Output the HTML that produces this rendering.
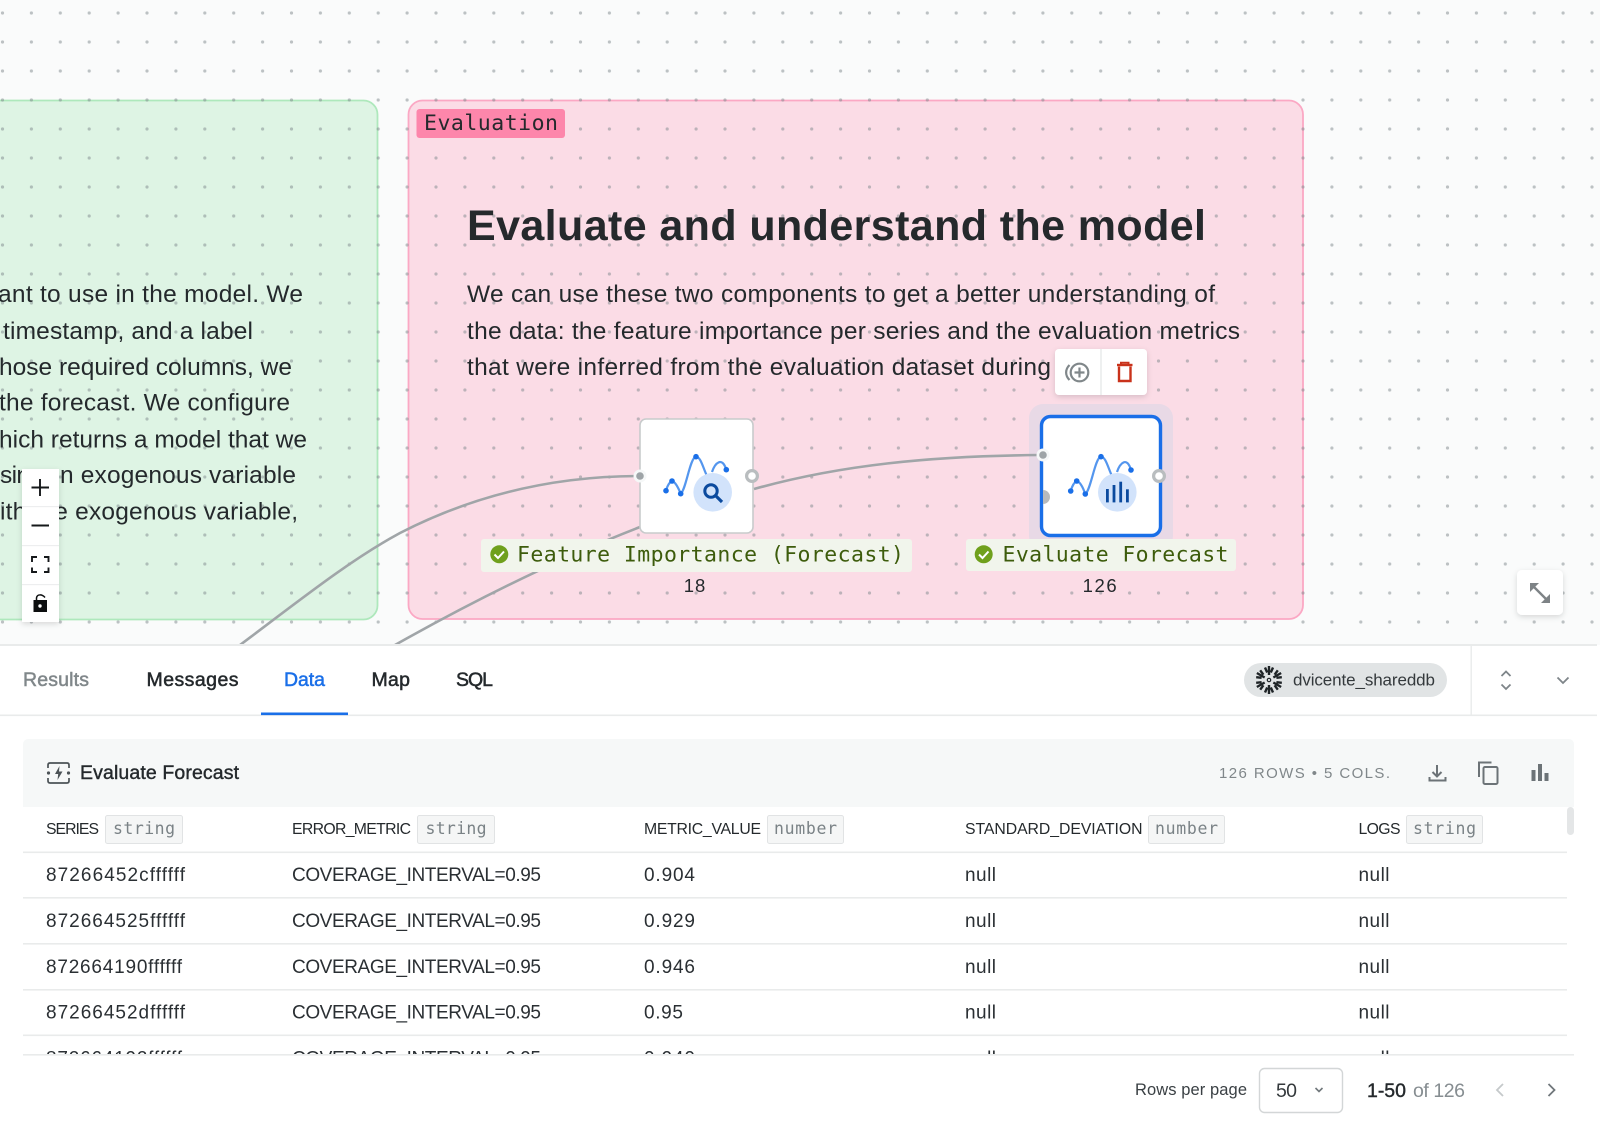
<!DOCTYPE html>
<html lang="en">
<head>
<meta charset="utf-8">
<title>Evaluate Forecast</title>
<style>
html,body{margin:0;padding:0;background:#fff;width:1600px;height:1147px;overflow:hidden}
svg{display:block;filter:blur(.38px)}
text{font-family:"Liberation Sans",sans-serif;fill:#24292c;white-space:pre}
.m{font-family:"DejaVu Sans Mono","Liberation Mono",monospace}
.p{font-size:24.5px;fill:#24292c}
.lb{font-size:21.5px;fill:#3d5c0c}
.tab{font-size:19.5px;stroke-width:.5;stroke:#24292c}
.h{font-size:15.8px;fill:#24292c}
.t{font-size:16.5px;fill:#7a8286}
.c{font-size:19px;fill:#2a2f33}
</style>
</head>
<body>
<svg xmlns="http://www.w3.org/2000/svg" width="1600" height="1147" viewBox="0 0 1600 1147">
<defs>
<pattern id="dots" x="2.5" y="13" width="28.9" height="29" patternUnits="userSpaceOnUse">
<circle cx="0" cy="0" r="1.6" fill="#7d878c" fill-opacity=".5"/>
<circle cx="28.9" cy="0" r="1.6" fill="#7d878c" fill-opacity=".5"/>
<circle cx="0" cy="29" r="1.6" fill="#7d878c" fill-opacity=".5"/>
<circle cx="28.9" cy="29" r="1.6" fill="#7d878c" fill-opacity=".5"/>
</pattern>
<filter id="sh" x="-30%" y="-30%" width="160%" height="170%"><feDropShadow dx="0" dy="2" stdDeviation="3" flood-color="#000" flood-opacity=".14"/></filter>
<clipPath id="tbl"><rect x="23" y="853" width="1544" height="202"/></clipPath>
<clipPath id="canvas"><rect x="0" y="0" width="1600" height="645"/></clipPath>
</defs>

<!-- canvas -->
<rect width="1600" height="645" fill="#fafbfb"/>
<rect x="-20" y="100.5" width="397.500" height="519" rx="14" fill="#def4e4" stroke="#aee8bc" stroke-width="1.8"/>
<rect x="408.5" y="100.5" width="894.500" height="518.500" rx="14" fill="#fbdce6" stroke="#fba8c4" stroke-width="1.8"/>
<rect width="1600" height="645" fill="url(#dots)"/>

<!-- green text -->
<g class="green">
<text class="p" x="-2" y="302" textLength="305" lengthAdjust="spacing">ant to use in the model. We</text>
<text class="p" x="3" y="339" textLength="250" lengthAdjust="spacing">timestamp, and a label</text>
<text class="p" x="-1" y="375" textLength="293" lengthAdjust="spacing">hose required columns, we</text>
<text class="p" x="-1" y="410.500" textLength="291" lengthAdjust="spacing">the forecast. We configure</text>
<text class="p" x="-1" y="447.500" textLength="308" lengthAdjust="spacing">hich returns a model that we</text>
<text class="p" x="0" y="483" textLength="30" lengthAdjust="spacing">sin</text>
<text class="p" x="60" y="483" textLength="236" lengthAdjust="spacing">n exogenous variable</text>
<text class="p" x="0" y="519.500" textLength="298" lengthAdjust="spacing">ith the exogenous variable,</text>
</g>

<!-- evaluation group -->
<rect x="416.500" y="109" width="148.500" height="29" rx="3" fill="#fd86ab"/>
<text class="m" x="424" y="130" font-size="21.500" textLength="134" lengthAdjust="spacing">Evaluation</text>
<text x="467" y="240" font-size="43" font-weight="700" textLength="739" lengthAdjust="spacing" style="fill:#25292c">Evaluate and understand the model</text>
<text class="p" x="467" y="302" textLength="748" lengthAdjust="spacing">We can use these two components to get a better understanding of</text>
<text class="p" x="467" y="339" textLength="773" lengthAdjust="spacing">the data: the feature importance per series and the evaluation metrics</text>
<text class="p" x="467" y="375" textLength="584" lengthAdjust="spacing">that were inferred from the evaluation dataset during</text>

<!-- edges below node 2 halo -->
<g clip-path="url(#canvas)" fill="none" stroke="#a0a5a8" stroke-width="2.6">
<path d="M240 645C300 600 350 560 400 533C470 497 550 476 640 476"/>
<path d="M395 645C475 600 560 558 640 527"/>
</g>

<!-- node 1 -->
<rect x="640" y="419" width="113" height="114" rx="6" fill="#fff" stroke="#c8cbcc" stroke-width="1.6"/>
<circle cx="640" cy="476" r="6.5" fill="#f6f8f8"/><circle cx="640" cy="476" r="3.8" fill="#9ea4a7"/>
<circle cx="752" cy="476" r="5.4" fill="#fff" stroke="#b9bdbf" stroke-width="3.2"/>
<g>
<path d="M666 490.7Q668 483 672 481Q676 482 680.7 493.7C686 490 690 457 696 456.7C701 457 703 468 707 476M712 472C715 463 722 456 726.3 469.7" fill="none" stroke="#5496ee" stroke-width="2.2"/>
<g fill="#1a6fe8"><circle cx="666" cy="490.7" r="2.8"/><circle cx="672" cy="481" r="2.8"/><circle cx="680.7" cy="493.7" r="2.8"/><circle cx="696" cy="456.7" r="2.8"/><circle cx="726.3" cy="469.7" r="2.8"/></g>
<circle cx="712.7" cy="492.3" r="19.3" fill="#d2e3fb"/>
<circle cx="711" cy="491" r="6.2" fill="none" stroke="#0b4a9e" stroke-width="3"/>
<path d="M715.5 495.5L722 502" stroke="#0b4a9e" stroke-width="3.2"/>
</g>

<!-- label 1 -->
<rect x="481" y="539" width="431" height="33" rx="3" fill="#f1f5ec"/>
<circle cx="499.3" cy="554.3" r="9" fill="#6fa01c"/>
<path d="M494.5 554.5L498 558L504 551.5" fill="none" stroke="#fff" stroke-width="2"/>
<text class="m lb" x="517" y="561.500" textLength="387" lengthAdjust="spacing">Feature Importance (Forecast)</text>
<text x="695" y="592" font-size="18.5" text-anchor="middle" letter-spacing="1">18</text>

<!-- node 2 -->
<rect x="1029" y="404" width="144" height="146" rx="14" fill="#e8d9e6"/>
<path d="M754 489C840 465 930 456 1040 455" fill="none" stroke="#a0a5a8" stroke-width="2.6"/>
<rect x="1041.5" y="416.5" width="119" height="119" rx="9" fill="#fff" stroke="#1a6fe8" stroke-width="3.4"/>
<path d="M1043 490A7 7 0 0 1 1043 504Z" fill="#b7babc"/>
<circle cx="1043" cy="455" r="6.5" fill="#f6f8f8"/><circle cx="1043" cy="455" r="3.8" fill="#9ea4a7"/>
<circle cx="1159" cy="476" r="5.4" fill="#fff" stroke="#b9bdbf" stroke-width="3.2"/>
<g>
<path d="M1070.7 491Q1073 483 1076.7 481Q1081 482 1085.3 494C1091 490 1095 457 1101 456.7C1106 457 1108 468 1112 476M1117 472C1120 463 1127 456 1131 470" fill="none" stroke="#5496ee" stroke-width="2.2"/>
<g fill="#1a6fe8"><circle cx="1070.7" cy="491" r="2.8"/><circle cx="1076.7" cy="481" r="2.8"/><circle cx="1085.3" cy="494" r="2.8"/><circle cx="1101" cy="456.7" r="2.8"/><circle cx="1131" cy="470" r="2.8"/></g>
<circle cx="1117.3" cy="492.3" r="19.3" fill="#d2e3fb"/>
<g fill="#0b4a9e"><rect x="1106" y="489" width="2.8" height="13.4"/><rect x="1112.6" y="485" width="2.8" height="17.4"/><rect x="1119.3" y="481.7" width="2.8" height="20.7"/><rect x="1126" y="489.3" width="2.8" height="13.1"/></g>
</g>

<!-- label 2 -->
<rect x="966" y="539" width="270" height="32" rx="3" fill="#f1f5ec"/>
<circle cx="983.7" cy="554.3" r="9" fill="#6fa01c"/>
<path d="M979 554.5L982.5 558L988.5 551.5" fill="none" stroke="#fff" stroke-width="2"/>
<text class="m lb" x="1002.500" y="561.500" textLength="226" lengthAdjust="spacing">Evaluate Forecast</text>
<text x="1100.500" y="592" font-size="18.5" text-anchor="middle" letter-spacing="1.6">126</text>

<!-- node toolbar -->
<g filter="url(#sh)"><rect x="1055" y="349" width="92" height="46" rx="4" fill="#fff"/></g>
<rect x="1100.4" y="349" width="1.2" height="46" fill="#e3e5e6"/>
<g fill="none" stroke="#80878a" stroke-width="2.200" transform="translate(-1 .5)">
<circle cx="1080.5" cy="372" r="8.8"/>
<path d="M1080.5 367V377M1075.5 372H1085.5"/>
<path d="M1070.5 364.5C1066 369 1066 375 1070.5 379.5"/>
</g>
<g fill="none" stroke="#c9321b" stroke-width="2.4" transform="translate(0 .5)">
<path d="M1117 364.5H1132.5"/>
<path d="M1121 363.5V362.2H1128.5V363.5" stroke-width="2"/>
<path d="M1119 366V380.5H1130.5V366"/>
</g>

<!-- zoom controls -->
<g filter="url(#sh)"><rect x="22" y="469" width="37" height="153" fill="#fff"/></g>
<g fill="#edeeef"><rect x="22" y="506" width="37" height="1.2"/><rect x="22" y="545" width="37" height="1.2"/><rect x="22" y="584" width="37" height="1.2"/></g>
<g fill="none" stroke="#15181a" stroke-width="1.9">
<path d="M31.5 487.5H49M40 479V496"/>
<path d="M31.5 525.5H49"/>
<path d="M32 562V557H37M44 557H48.5V562M48.5 567.5V572H44M37 572H32V567.5"/>
</g>
<path d="M33.5 600H47V612H33.5Z" fill="#0c0e0f"/>
<path d="M36.500 600V598C37 594 42 594 45 597.500" fill="none" stroke="#0c0e0f" stroke-width="1.5"/>
<circle cx="40" cy="606" r="1.7" fill="#fff"/>

<!-- expand -->
<g filter="url(#sh)"><rect x="1517" y="570" width="46" height="45" rx="5" fill="#fff"/></g>
<path d="M1534 587L1546 599" stroke="#7e8386" stroke-width="2.4"/>
<path d="M1530 583H1539L1530 592ZM1550 603H1541L1550 594Z" fill="#7e8386"/>

<!-- bottom panel -->
<rect x="0" y="645" width="1600" height="502" fill="#fff"/>
<rect x="0" y="644" width="1597" height="2" fill="#e9ebeb"/>
<rect x="0" y="714.5" width="1597" height="1.6" fill="#e9ebeb"/>
<rect x="1470.5" y="645" width="1.4" height="70" fill="#e9ebeb"/>

<text class="tab" x="23" y="686" textLength="66" lengthAdjust="spacing" style="fill:#80878a;stroke:#80878a">Results</text>
<text class="tab" x="146.500" y="686" textLength="92" lengthAdjust="spacing">Messages</text>
<text class="tab" x="284" y="686" textLength="41" lengthAdjust="spacing" style="fill:#1a6fe8;stroke:#1a6fe8">Data</text>
<text class="tab" x="371.500" y="686" textLength="38.500" lengthAdjust="spacing">Map</text>
<text class="tab" x="456" y="686" textLength="37" lengthAdjust="spacing">SQL</text>
<rect x="261" y="712.5" width="87" height="2.6" fill="#1a6fe8"/>

<!-- chip -->
<rect x="1244" y="663" width="203" height="34" rx="17" fill="#e1e4e5"/>
<g transform="translate(1269 680)" fill="none" stroke="#1f2427" stroke-width="2.4">
<circle r="1.7" stroke-width="1.2"/>
<g><path d="M0 -5V-14M-4 -12.500L-1.800 -7.500M4 -12.500L1.800 -7.500"/></g>
<g transform="rotate(60)"><path d="M0 -5V-14M-4 -12.500L-1.800 -7.500M4 -12.500L1.800 -7.500"/></g>
<g transform="rotate(120)"><path d="M0 -5V-14M-4 -12.500L-1.800 -7.500M4 -12.500L1.800 -7.500"/></g>
<g transform="rotate(180)"><path d="M0 -5V-14M-4 -12.500L-1.800 -7.500M4 -12.500L1.800 -7.500"/></g>
<g transform="rotate(240)"><path d="M0 -5V-14M-4 -12.500L-1.800 -7.500M4 -12.500L1.800 -7.500"/></g>
<g transform="rotate(300)"><path d="M0 -5V-14M-4 -12.500L-1.800 -7.500M4 -12.500L1.800 -7.500"/></g>
</g>
<text x="1293" y="685.5" font-size="17" textLength="142" lengthAdjust="spacing" style="fill:#34393c">dvicente_shareddb</text>
<g fill="none" stroke="#7e8589" stroke-width="1.8">
<path d="M1501.5 676L1506 671.5L1510.5 676"/>
<path d="M1501.5 684.5L1506 689L1510.5 684.5"/>
<path d="M1557.5 677.500L1563 683L1568.5 677.500"/>
</g>

<!-- table header -->
<path d="M23 807V745Q23 739 29 739H1568Q1574 739 1574 745V807Z" fill="#f6f8f8"/>
<g fill="none" stroke="#4c5357" stroke-width="1.7">
<path d="M48 768V765Q48 763 50 763H67Q69 763 69 765V768"/>
<path d="M48 778V781Q48 783 50 783H67Q69 783 69 781V778"/>
</g>
<g fill="#4c5357"><circle cx="48.5" cy="773" r="1.6"/><circle cx="68.5" cy="773" r="1.6"/></g>
<path d="M59.5 766L55 774H58.2L57.5 780L62.5 771.5H59Z" fill="#4c5357"/>
<text x="80" y="779" font-size="19.5" textLength="159" lengthAdjust="spacing" style="stroke:#24292c;stroke-width:.4">Evaluate Forecast</text>
<text x="1219" y="778" font-size="15" textLength="171" lengthAdjust="spacing" style="fill:#80878a">126 ROWS • 5 COLS.</text>
<g fill="none" stroke="#6c7377" stroke-width="2">
<path d="M1437 765V776M1432.5 772L1437 776.5L1441.5 772"/>
<path d="M1429.5 777V780.5H1445.5V777"/>
<path d="M1479 777V762.500H1491.500"/>
<rect x="1483.500" y="767" width="14" height="17" rx="1.4"/>
</g>
<g fill="#6c7377"><rect x="1531.5" y="770" width="4" height="11"/><rect x="1538" y="764" width="4" height="17"/><rect x="1544.5" y="773" width="4" height="8"/></g>

<!-- column headers -->
<text class="h" x="46" y="834" textLength="53" lengthAdjust="spacing">SERIES</text>
<rect x="105.500" y="815.5" width="77" height="28" rx="2" fill="#f5f6f6" stroke="#e1e3e4"/>
<text class="m t" x="113" y="834" textLength="62" lengthAdjust="spacing">string</text>

<text class="h" x="292" y="834" textLength="119" lengthAdjust="spacing">ERROR_METRIC</text>
<rect x="417.5" y="815.5" width="77" height="28" rx="2" fill="#f5f6f6" stroke="#e1e3e4"/>
<text class="m t" x="425.500" y="834" textLength="61" lengthAdjust="spacing">string</text>

<text class="h" x="644" y="834" textLength="117" lengthAdjust="spacing">METRIC_VALUE</text>
<rect x="767.5" y="815.5" width="76" height="28" rx="2" fill="#f5f6f6" stroke="#e1e3e4"/>
<text class="m t" x="774" y="834" textLength="63" lengthAdjust="spacing">number</text>

<text class="h" x="965" y="834" textLength="177.500" lengthAdjust="spacing">STANDARD_DEVIATION</text>
<rect x="1148.5" y="815.5" width="76" height="28" rx="2" fill="#f5f6f6" stroke="#e1e3e4"/>
<text class="m t" x="1155" y="834" textLength="63" lengthAdjust="spacing">number</text>

<text class="h" x="1358.500" y="834" textLength="42" lengthAdjust="spacing">LOGS</text>
<rect x="1406.5" y="815.500" width="76" height="28" rx="2" fill="#f5f6f6" stroke="#e1e3e4"/>
<text class="m t" x="1413" y="834" textLength="63" lengthAdjust="spacing">string</text>

<rect x="1567" y="807" width="7" height="28" rx="3.500" fill="#e4e6e7"/>

<!-- rows -->
<g fill="#e9ebeb">
<rect x="23" y="851.500" width="1544" height="1.6"/>
<rect x="23" y="897" width="1544" height="1.600"/>
<rect x="23" y="943" width="1544" height="1.600"/>
<rect x="23" y="989" width="1544" height="1.600"/>
<rect x="23" y="1034.500" width="1544" height="1.600"/>
</g>
<g clip-path="url(#tbl)">
<text class="c" x="46" y="881" textLength="139" lengthAdjust="spacing">87266452cffffff</text>
<text class="c" x="292" y="881" textLength="249" lengthAdjust="spacing">COVERAGE_INTERVAL=0.95</text>
<text class="c" x="644" y="881" textLength="51" lengthAdjust="spacing">0.904</text>
<text class="c" x="965" y="881" textLength="31" lengthAdjust="spacing">null</text>
<text class="c" x="1358.500" y="881" textLength="31" lengthAdjust="spacing">null</text>

<text class="c" x="46" y="927" textLength="139" lengthAdjust="spacing">872664525ffffff</text>
<text class="c" x="292" y="927" textLength="249" lengthAdjust="spacing">COVERAGE_INTERVAL=0.95</text>
<text class="c" x="644" y="927" textLength="51" lengthAdjust="spacing">0.929</text>
<text class="c" x="965" y="927" textLength="31" lengthAdjust="spacing">null</text>
<text class="c" x="1358.500" y="927" textLength="31" lengthAdjust="spacing">null</text>

<text class="c" x="46" y="973" textLength="136" lengthAdjust="spacing">872664190ffffff</text>
<text class="c" x="292" y="973" textLength="249" lengthAdjust="spacing">COVERAGE_INTERVAL=0.95</text>
<text class="c" x="644" y="973" textLength="51" lengthAdjust="spacing">0.946</text>
<text class="c" x="965" y="973" textLength="31" lengthAdjust="spacing">null</text>
<text class="c" x="1358.500" y="973" textLength="31" lengthAdjust="spacing">null</text>

<text class="c" x="46" y="1018.500" textLength="139" lengthAdjust="spacing">87266452dffffff</text>
<text class="c" x="292" y="1018.500" textLength="249" lengthAdjust="spacing">COVERAGE_INTERVAL=0.95</text>
<text class="c" x="644" y="1018.500" textLength="39" lengthAdjust="spacing">0.95</text>
<text class="c" x="965" y="1018.500" textLength="31" lengthAdjust="spacing">null</text>
<text class="c" x="1358.500" y="1018.500" textLength="31" lengthAdjust="spacing">null</text>

<text class="c" x="46" y="1064.500" textLength="136" lengthAdjust="spacing">872664192ffffff</text>
<text class="c" x="292" y="1064.500" textLength="249" lengthAdjust="spacing">COVERAGE_INTERVAL=0.95</text>
<text class="c" x="644" y="1064.500" textLength="51" lengthAdjust="spacing">0.940</text>
<text class="c" x="965" y="1064.500" textLength="31" lengthAdjust="spacing">null</text>
<text class="c" x="1358.500" y="1064.500" textLength="31" lengthAdjust="spacing">null</text>
</g>
<rect x="23" y="1054" width="1551" height="1.600" fill="#e9ebeb"/>

<!-- footer -->
<text x="1135" y="1095" font-size="16.5" textLength="112" lengthAdjust="spacing" style="fill:#3a4044">Rows per page</text>
<rect x="1259.500" y="1068.500" width="83" height="44" rx="5" fill="#fff" stroke="#d3d6d7" stroke-width="1.400"/>
<text x="1276" y="1097" font-size="19.500" textLength="21" lengthAdjust="spacing" style="fill:#34393c">50</text>
<path d="M1315.500 1088L1319 1091.500L1322.500 1088" fill="none" stroke="#70777b" stroke-width="1.600"/>
<text x="1367" y="1097" font-size="19.500" textLength="39" lengthAdjust="spacing" style="stroke:#24292c;stroke-width:.4">1-50</text>
<text x="1413" y="1097" font-size="19.500" textLength="52" lengthAdjust="spacing" style="fill:#868d91">of 126</text>
<path d="M1503 1084L1497 1090L1503 1096" fill="none" stroke="#c5c9cb" stroke-width="1.800"/>
<path d="M1548.500 1084L1554.500 1090L1548.500 1096" fill="none" stroke="#70777b" stroke-width="1.800"/>
</svg>
</body>
</html>
